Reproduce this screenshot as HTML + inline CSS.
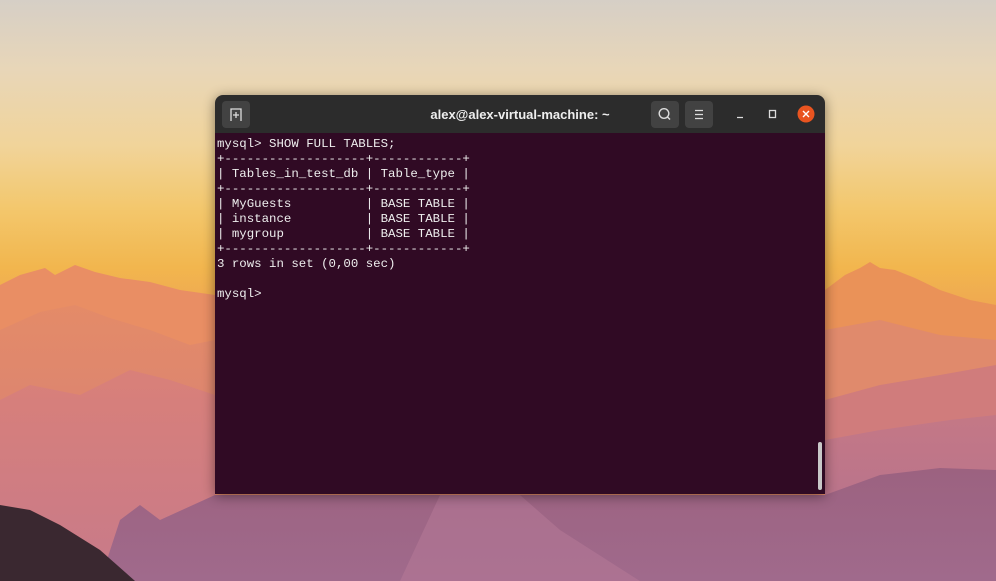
<!DOCTYPE html>
<html><head><meta charset="utf-8"><style>
html,body{margin:0;padding:0;width:996px;height:581px;overflow:hidden}
body{position:relative;background:linear-gradient(180deg,#d6cfc6 0%,#e8d6b8 12%,#f1d49a 25%,#f3c76c 36%,#f2b64e 46%,#eea452 55%,#e58d6a 65%)}
.win{position:absolute;left:215px;top:95px;width:610px;height:399px;border-radius:8px 8px 0 0;overflow:hidden;box-shadow:0 2px 12px rgba(0,0,0,.45)}
.tb{height:38px;background:#2c2c2c;position:relative;color:#fff;font:bold 13px "Liberation Sans",sans-serif}
.title{position:absolute;left:0;right:0;top:12px;text-align:center;color:#eee}
.btn{position:absolute;top:6px;width:28px;height:27px;background:#424242;border-radius:4px}
.term{background:#300a24;height:361px;position:relative;color:#eee;font:12.4px/15px "Liberation Mono",monospace;white-space:pre;padding:4px 0 0 2px;box-sizing:border-box}
.sb{position:absolute;left:603px;top:309px;width:4px;height:48px;background:#c8c8c8;border-radius:2px}
</style></head><body>
<svg width="996" height="581" style="position:absolute;left:0;top:0">
<defs>
<linearGradient id="g1" x1="0" y1="0" x2="0" y2="1"><stop offset="0" stop-color="#e48b68"/><stop offset="1" stop-color="#d07c7c"/></linearGradient>
<linearGradient id="g2" x1="0" y1="0" x2="0" y2="1"><stop offset="0" stop-color="#d98079"/><stop offset="1" stop-color="#c77a8a"/></linearGradient>
<linearGradient id="g3" x1="0" y1="0" x2="0" y2="1"><stop offset="0" stop-color="#c47886"/><stop offset="1" stop-color="#b07090"/></linearGradient>
<linearGradient id="g4" x1="0" y1="0" x2="0" y2="1"><stop offset="0" stop-color="#9c6280"/><stop offset="1" stop-color="#a06a8c"/></linearGradient>
</defs>
<path d="M0 285 L20 275 L45 268 L55 275 L75 265 L95 272 L120 278 L150 282 L180 290 L215 295 L215 581 L0 581Z" fill="#e98e64"/>
<path d="M825 290 L845 275 L860 268 L870 262 L880 268 L895 270 L915 278 L940 290 L970 300 L996 305 L996 581 L825 581Z" fill="#ea9258"/>
<path d="M0 330 L40 312 L75 305 L110 318 L150 330 L190 345 L215 340 L215 581 L0 581Z" fill="url(#g1)"/>
<path d="M825 330 L880 320 L940 335 L996 340 L996 581 L825 581Z" fill="#e08a6c"/>
<path d="M0 400 L30 385 L80 395 L130 370 L170 380 L215 395 L215 581 L0 581Z" fill="url(#g2)"/>
<path d="M825 400 L880 385 L940 375 L996 365 L996 581 L825 581Z" fill="#d07c7c"/>
<path d="M825 440 L880 430 L950 420 L996 415 L996 581 L825 581Z" fill="url(#g3)"/>
<path d="M100 581 L120 520 L140 505 L160 520 L215 495 L825 495 L880 475 L940 468 L996 470 L996 581Z" fill="url(#g4)"/>
<path d="M400 581 L440 495 L520 495 L560 530 L640 581Z" fill="#b47896" opacity=".6"/>
<path d="M0 505 L30 510 L60 525 L100 550 L135 581 L0 581Z" fill="#3a2830"/>
</svg>
<div class="win">
<div class="tb">
<div class="btn" style="left:7px"><svg width="28" height="27"><path d="M9 20 V8 H19 V20 M14 11 V17 M11 14 H17" stroke="#ddd" stroke-width="1.3" fill="none"/></svg></div>
<div class="title">alex@alex-virtual-machine: ~</div>
<div class="btn" style="left:436px"><svg width="28" height="27"><circle cx="13" cy="12.5" r="4.8" stroke="#ddd" stroke-width="1.4" fill="none"/><path d="M16.5 16 L19 18.5" stroke="#ddd" stroke-width="1.4"/></svg></div>
<div class="btn" style="left:470px"><svg width="28" height="27"><path d="M10 9.5 H18 M10 13.5 H18 M10 17.5 H18" stroke="#ddd" stroke-width="1.2"/></svg></div>
<svg style="position:absolute;left:515px;top:8px" width="95" height="24"><path d="M7 14.5 H13" stroke="#ddd" stroke-width="1.3"/><rect x="39.5" y="7.5" width="6" height="7" stroke="#ddd" stroke-width="1.3" fill="none"/><circle cx="76" cy="11" r="8.5" fill="#e95420"/><path d="M73 8 L79 14 M79 8 L73 14" stroke="#fff" stroke-width="1.4"/></svg>
</div>
<div class="term">mysql&gt; SHOW FULL TABLES;
+-------------------+------------+
| Tables_in_test_db | Table_type |
+-------------------+------------+
| MyGuests          | BASE TABLE |
| instance          | BASE TABLE |
| mygroup           | BASE TABLE |
+-------------------+------------+
3 rows in set (0,00 sec)

mysql&gt; <div class="sb"></div></div>
</div>
</body></html>
